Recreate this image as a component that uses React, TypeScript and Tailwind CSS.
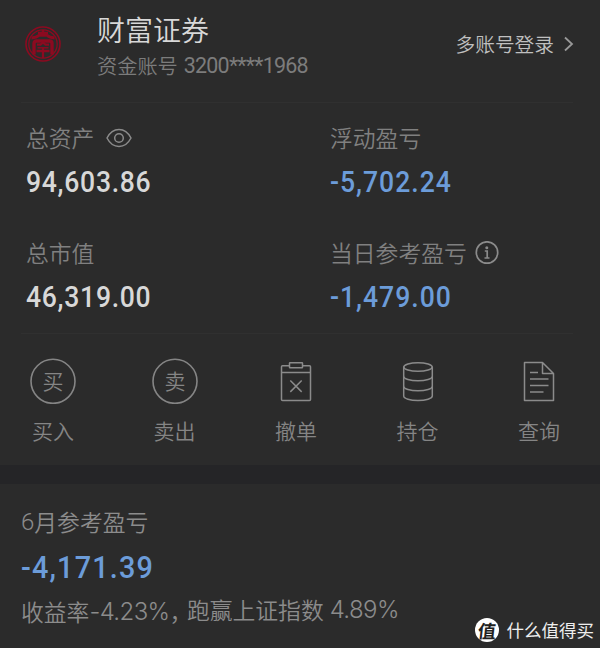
import type { ReactNode } from "react";

const cjk = "font-['Noto_Sans_CJK_SC',sans-serif]";
const roboto = "font-['Roboto','Noto_Sans_CJK_SC',sans-serif]";
const inter = "font-['Inter','Noto_Sans_CJK_SC',sans-serif]";

function Logo() {
  return (
    <svg className="size-9 shrink-0" viewBox="0 0 36 36" fill="none" stroke="#8c0a20">
      <circle cx="18" cy="18" r="17" strokeWidth="1.6" />
      <circle cx="18" cy="18" r="14.2" strokeWidth="1.3" />
      <path d="M18 4v6M13 7h10" strokeWidth="2.6" />
      <path d="M6.5 12q5-.3 7.5-2.700h8q2.500 2.400 7.500 2.700" strokeWidth="2.800" />
      <path d="M9 28.500V17.500q0-2.500 2.500-2.500h13q2.500 0 2.500 2.500v11" strokeWidth="3.400" />
      <path d="M12 18.700h3.500l2.500-2.200 2.500 2.200H24M11.500 25h13M18 22v10" strokeWidth="2.300" />
      <path d="M12.500 21.800h11" strokeWidth="1.500" />
    </svg>
  );
}

function EyeIcon() {
  return (
    <svg className="h-5 w-[26px]" viewBox="0 0 26 20" fill="none" stroke="#8b8b8b" strokeWidth="1.5">
      <path d="M1 10C4 4.200 8.200 1.500 13 1.500S22 4.200 25 10C22 15.800 17.800 18.500 13 18.500S4 15.800 1 10Z" />
      <circle cx="13" cy="10" r="4.300" />
    </svg>
  );
}

function InfoIcon() {
  return (
    <svg className="size-6" viewBox="0 0 24 24" fill="none" stroke="#8b8b8b" strokeWidth="1.700">
      <circle cx="12" cy="11.500" r="10.700" />
      <circle cx="11.800" cy="6.700" r="1.500" fill="#8b8b8b" stroke="none" />
      <path d="M9.800 10h2.400v7M9.500 17h5" strokeWidth="1.700" />
    </svg>
  );
}

function CircleIcon({ text }: { text: string }) {
  return (
    <svg className="size-[46px]" viewBox="0 0 46 46">
      <circle cx="23" cy="23.300" r="22" fill="none" stroke="#858585" strokeWidth="1.600" />
      <text x="23" y="31" textAnchor="middle" fill="#858585" className="text-[21px] font-[350]">
        {text}
      </text>
    </svg>
  );
}

function CancelIcon() {
  return (
    <svg className="h-[46px] w-8" viewBox="0 0 32 46" fill="none" stroke="#8b8b8b" strokeWidth="1.500">
      <path d="M9.500 7.700h-7q-1 0-1 1v32.800q0 1 1 1h27q1 0 1-1V8.700q0-1-1-1h-7M1.500 14.500h29" />
      <rect x="9.500" y="4.700" width="13" height="5" rx=".5" />
      <path d="m10.300 22.500 11.400 11.400M21.700 22.500 10.300 33.900" />
    </svg>
  );
}

function PositionIcon() {
  return (
    <svg className="h-[46px] w-8" viewBox="0 0 32 46" fill="none" stroke="#8b8b8b" strokeWidth="1.500">
      <ellipse cx="16" cy="9" rx="14.300" ry="4.300" />
      <path d="M1.700 9v29c0 2.500 6.400 4.500 14.300 4.500s14.300-2 14.300-4.500V9" />
      <path d="M1.700 18.500c0 2.400 6.400 4.300 14.300 4.300s14.300-1.900 14.300-4.300M1.700 28.500c0 2.400 6.400 4.300 14.300 4.300s14.300-1.900 14.300-4.300" />
    </svg>
  );
}

function QueryIcon() {
  return (
    <svg className="h-[46px] w-8" viewBox="0 0 32 46" fill="none" stroke="#8b8b8b" strokeWidth="1.500" strokeLinejoin="round">
      <path d="M1.500 4.500h18l11 11v27h-29zM19.500 4.500v11h11" />
      <path d="M7 14.500h8M7 21h18.500M7 27.500h18.500M7 34h13.500" strokeWidth="1.700" />
    </svg>
  );
}

function Metric({ label, value, loss, icon }: { label: string; value: string; loss?: boolean; icon?: ReactNode }) {
  return (
    <div className="flex flex-col">
      <div className="flex h-8 items-center text-[22.8px] leading-8 font-[350] text-[#808080]">
        <span>{label}</span>
        {icon}
      </div>
      <div
        className={`${roboto} mt-2.5 h-9 origin-left scale-x-90 text-[29.5px] leading-9 font-medium ${
          loss ? "tracking-[1.1px] text-[#6c9cd9]" : "tracking-[0.8px] text-[#d8d8d8]"
        }`}
      >
        {value}
      </div>
    </div>
  );
}

const actions = [
  { label: "买入", icon: <CircleIcon text="买" /> },
  { label: "卖出", icon: <CircleIcon text="卖" /> },
  { label: "撤单", icon: <CancelIcon /> },
  { label: "持仓", icon: <PositionIcon /> },
  { label: "查询", icon: <QueryIcon /> },
];

export default function App() {
  return (
    <div className={`${cjk} flex h-[648px] w-[600px] flex-col overflow-hidden bg-[#2b2b2b] text-[#858585]`}>
      <header className="flex h-[102px] items-start pr-[26px] pl-[25px]">
        <div className="pt-[26px]">
          <Logo />
        </div>
        <div className="ml-9 pt-[9px]">
          <h1 className="h-10 text-[28px] leading-10 font-[350] text-[#d8d8d8]">财富证券</h1>
          <div className="mt-px flex h-8 text-[20.2px] leading-8 font-[350] text-[#7c7c7c]">
            <span>资金账号</span>
            <span className={`${roboto} ml-1.5 text-[21.5px] font-normal tracking-[-0.8px]`}>3200****1968</span>
          </div>
        </div>
        <div className="ml-auto flex items-center gap-2.5 pt-7 text-[19.7px] leading-8 font-[350] text-[#c0c0c0]">
          <span>多账号登录</span>
          <svg className="h-4 w-2.5" viewBox="0 0 10 16" fill="none" stroke="#999" strokeWidth="1.800">
            <path d="m1 1.500 7 6.500-7 6.500" />
          </svg>
        </div>
      </header>
      <div className="mr-[27px] ml-[21px] h-px shrink-0 bg-[#303030]" />

      <section className="grid h-[230px] grid-cols-[304px_1fr] grid-rows-[115px_115px] pt-[19px] pl-[26px]">
        <Metric label="总资产" value="94,603.86" icon={<span className="ml-3"><EyeIcon /></span>} />
        <Metric label="浮动盈亏" value="-5,702.24" loss />
        <Metric label="总市值" value="46,319.00" />
        <Metric label="当日参考盈亏" value="-1,479.00" loss icon={<span className="ml-2"><InfoIcon /></span>} />
      </section>
      <div className="mr-[27px] ml-[21px] h-px shrink-0 bg-[#303030]" />

      <nav className="flex h-[131px] shrink-0 justify-between pt-6 pr-9 pl-7">
        {actions.map((action) => (
          <div key={action.label} className="flex w-[50px] flex-col items-center">
            {action.icon}
            <span className="mt-2.5 text-[21px] leading-8 font-[350] whitespace-nowrap">{action.label}</span>
          </div>
        ))}
      </nav>
      <div className="h-[19px] shrink-0 bg-[#252527]" />

      <section className="flex grow justify-between pt-5 pl-[21px]">
        <div className="flex flex-col font-[350] text-[#8c8c8c]">
          <div className="flex h-9 text-[22.8px] leading-9">
            <span className={`${roboto} text-[24px]`}>6</span>
            <span>月参考盈亏</span>
          </div>
          <div
            className={`${roboto} mt-[7px] h-10 origin-left scale-x-90 text-[32px] leading-10 font-medium tracking-[1.3px] text-[#6c9cd9]`}
          >
            -4,171.39
          </div>
          <div className="mt-[5px] flex h-9 text-[22.8px] leading-9 whitespace-nowrap">
            <span className="pt-0.5">收益率</span>
            <span className={`${inter} pt-0.5 text-[24px] tracking-[-0.6px]`}>-4.23%</span>
            <span className="mr-1.5 pt-0.5 [font-feature-settings:'halt']">，</span>
            <span>跑赢上证指数</span>
            <span className={`${inter} ml-1.5 text-[24px] tracking-[-0.6px]`}>4.89%</span>
          </div>
        </div>
        <div className="flex items-center gap-2 self-end pr-[6px] pb-1.5 text-[17.5px] leading-6 text-[#eee]">
          <span className="flex size-6 items-center justify-center rounded-full bg-white text-[18px] font-bold text-[#222]">
            <span className="-skew-x-6">值</span>
          </span>
          <span>什么值得买</span>
        </div>
      </section>
    </div>
  );
}
